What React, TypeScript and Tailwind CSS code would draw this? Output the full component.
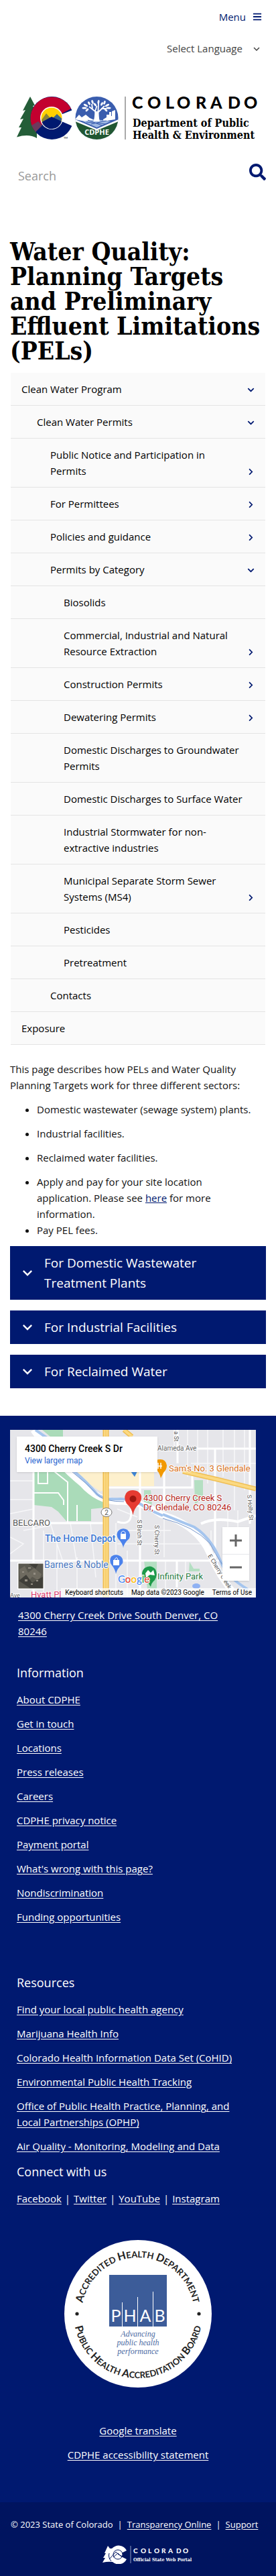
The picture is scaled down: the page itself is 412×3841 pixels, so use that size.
import type { ReactNode } from "react";
import { FaBars, FaChevronDown, FaChevronRight, FaSearch } from "react-icons/fa";
import { MdExpandMore } from "react-icons/md";

type NavRow = { label: string; level: 1 | 2 | 3 | 4; icon?: "open" | "closed" };

const navRows: NavRow[] = [
  { label: "Clean Water Program", level: 1, icon: "open" },
  { label: "Clean Water Permits", level: 2, icon: "open" },
  { label: "Public Notice and Participation in Permits", level: 3, icon: "closed" },
  { label: "For Permittees", level: 3, icon: "closed" },
  { label: "Policies and guidance", level: 3, icon: "closed" },
  { label: "Permits by Category", level: 3, icon: "open" },
  { label: "Biosolids", level: 4 },
  { label: "Commercial, Industrial and Natural Resource Extraction", level: 4, icon: "closed" },
  { label: "Construction Permits", level: 4, icon: "closed" },
  { label: "Dewatering Permits", level: 4, icon: "closed" },
  { label: "Domestic Discharges to Groundwater Permits", level: 4 },
  { label: "Domestic Discharges to Surface Water", level: 4 },
  { label: "Industrial Stormwater for non-extractive industries", level: 4 },
  { label: "Municipal Separate Storm Sewer Systems (MS4)", level: 4, icon: "closed" },
  { label: "Pesticides", level: 4 },
  { label: "Pretreatment", level: 4 },
  { label: "Contacts", level: 3 },
  { label: "Exposure", level: 1 },
];

const indent = { 1: "pl-4", 2: "pl-[39px]", 3: "pl-[59px]", 4: "pl-[79px]" };

const information = [
  "About CDPHE",
  "Get in touch",
  "Locations",
  "Press releases",
  "Careers",
  "CDPHE privacy notice",
  "Payment portal",
  "What's wrong with this page?",
  "Nondiscrimination",
  "Funding opportunities",
];

const resources = [
  "Find your local public health agency",
  "Marijuana Health Info",
  "Colorado Health Information Data Set (CoHID)",
  "Environmental Public Health Tracking",
  "Office of Public Health Practice, Planning, and Local Partnerships (OPHP)",
  "Air Quality - Monitoring, Modeling and Data",
];

function DepartmentLogo() {
  return (
    <svg viewBox="0 0 363 66" className="block w-full" role="img" aria-label="Colorado Department of Public Health and Environment">
      <path d="M20 0 L27 13 L24 14 L30 24 L30 62 Q18 55 0 60.500 L7 46 L3 46 L10 33 L5 34 L13 20 L9 21 Z" fill="#245d38" />
      <circle cx="52.500" cy="32" r="32" fill="#001970" />
      <path d="M20.500 32 A32 32 0 0 1 81 18 L68 25 L52 32 L26 50 Q20.500 42 20.500 32 Z" fill="#c3002f" />
      <path d="M22 43 L32 37 L38 43 L28 53 Z" fill="#6d3a5d" />
      <path d="M81 21 L86 19 L86 46 L81 43 L67 37 L67 26.500 Z" fill="#fff" />
      <circle cx="52" cy="32" r="17" fill="#fff" />
      <circle cx="52" cy="32" r="15.500" fill="#ffd100" />
      <path d="M37 35 L44 25 L52 34 L60 27 L67 35 A15.500 15.500 0 0 1 37 35 Z" fill="#8b8536" />
      <path d="M54 32 L60 26 L67.400 33 L66 37 Z" fill="#35658e" />
      <path d="M37.500 38 L52 30 L67 37 A15.500 15.500 0 0 1 37.500 38 Z" fill="#001970" />
      <text x="70" y="63" fontSize="4" fontFamily="Lato">TM</text>

      <clipPath id="sealClip">
        <circle cx="119.500" cy="32" r="32" />
      </clipPath>
      <g clipPath="url(#sealClip)">
        <path d="M87 0 H152 V64 H87 Z" fill="#3a5dae" />
        <path d="M87 34 L93 27 L97 31 L103 27 L109 32 L116 35 L116 40 L87 34 Z M129 34 L134 31 V27 H138 V23 H141 V29 H142 V22 L147 20 V34 L129 37 Z" fill="#fff" />
        <path d="M87 34 L119.500 48 L152 34 V64 H87 Z" fill="#fff" />
        <path d="M87 37 L119.500 50.500 L152 37 V64 H87 Z" fill="#215732" />
        <path d="M99 37 L119 34 L140 37 L119.500 46 Z" fill="#9fb8e2" />
        <path d="M104 38 L133 41 M111 41 L134 36 M106 35 L127 43" stroke="#3a5dae" fill="none" />
        <path d="M115 37 Q119 31 117 22 L108 15 M117 22 L119.500 14 M121 24 L131 14 M113 18 L112 11 M121.500 22 L122 10 M126 18 L134 18 M123 37 Q121 30 121.500 22" stroke="#fff" strokeWidth="1.800" fill="none" />
        <path d="M117 22 H122 L123 37 H115 Z" fill="#fff" />
        <g fill="#fff">
          <ellipse cx="103" cy="13" rx="3.500" ry="1.500" transform="rotate(30 103 13)" />
          <ellipse cx="101" cy="17" rx="3.500" ry="1.500" />
          <ellipse cx="108" cy="10" rx="3" ry="1.500" transform="rotate(60 108 10)" />
          <ellipse cx="105" cy="20" rx="3" ry="1.500" transform="rotate(-45 105 20)" />
          <ellipse cx="113" cy="8" rx="3" ry="1.500" transform="rotate(70 113 8)" />
          <ellipse cx="117" cy="12" rx="3" ry="1.500" transform="rotate(50 117 12)" />
          <ellipse cx="122" cy="8" rx="3" ry="1.500" transform="rotate(100 122 8)" />
          <ellipse cx="127" cy="11" rx="3" ry="1.500" transform="rotate(120 127 11)" />
          <ellipse cx="131" cy="9" rx="3" ry="1.500" transform="rotate(110 131 9)" />
          <ellipse cx="135" cy="13" rx="3.500" ry="1.500" transform="rotate(150 135 13)" />
          <ellipse cx="137" cy="17" rx="3.500" ry="1.500" />
          <ellipse cx="133" cy="20" rx="3" ry="1.500" transform="rotate(45 133 20)" />
        </g>
      </g>
      <text x="119.500" y="57" textAnchor="middle" fontSize="11" fontWeight="700" fontFamily="Open Sans" fill="#fff">CDPHE</text>

      <path d="M162 0 V64" stroke="#555" />
      <text x="172 195 222 239 267 289 315 339" y="18" fontSize="25" fontWeight="900" fontFamily="Lato">COLORADO</text>
      <g fontSize="16" fontWeight="700" fontFamily="'DejaVu Serif Condensed', 'DejaVu Serif', serif">
        <text x="173" y="45">Department of Public</text>
        <text x="173" y="63">Health &amp; Environment</text>
      </g>
    </svg>
  );
}

function PlaceMap() {
  return (
    <div className="relative mr-[15px] h-[250px] overflow-hidden bg-[#e8eaed]">
      <svg viewBox="0 0 367 250" preserveAspectRatio="xMidYMid slice" className="block h-full w-full" fontFamily="Roboto, sans-serif">
        <rect width="367" height="250" fill="#e6e6ea" />
        <path d="M48 0 H79 V10 H60 Z M35 62 H90 L105 76 L125 95 L141 108 V116 L121 118 V136 H84 L72 122 L62 115 L35 112 Z" fill="#aadbb9" />
        <path d="M90 62 H215 V84 H150 L135 92 Z" fill="#fdf0cd" />
        <path d="M200 90 H210 L212 112 L200 110 Z M200 195 H219 V237 H205 Z M268 197 L274 207 H283 V211 H267 Z M275 75 H288 V100 L276 112 Z" fill="#b4dfc2" />
        <g fill="none" stroke="#f7f7f9" strokeWidth="1.500">
          <path d="M0 76 H35 M0 104 H35 M0 160 L20 170 L0 185 M20 150 L60 143 M60 139 L80 200 M90 139 L100 200 M120 139 L128 220 M50 150 V250 M70 160 V250 M100 190 V240 M0 125 L35 118 M158 139 V250 M175 180 V250 M230 70 V190 M245 0 V30 M265 0 V70 M280 0 V60 M295 0 V80 M318 0 V70 M335 0 V120 M350 0 V90 M232 195 V250 M262 195 V225 M300 150 V200 M325 120 V145 M340 120 V145 M160 150 H240 M160 170 H290 M230 28 H367 M270 50 H367 M160 118 L190 130" />
        </g>
        <g fill="none" stroke="#fff">
          <path d="M35 62 V250 M0 195 H315 M35 139 H141 M141 86 H272 V60 M228 28 H367 M306 28 V195 M230 60 V120 M194 62 V195 M249 195 V235 M250 0 V50 M358 0 V140 M194 147 V250 M160 137 Q185 145 180 115" strokeWidth="3" />
          <path d="M42 62 V80 H56 V62 M35 94 H72 L80 105 V112 M66 62 L86 78 V139 M100 112 V136" strokeWidth="2" />
          <path d="M285 140 Q305 130 340 137 L367 128" strokeWidth="4" />
          <path d="M35 0 Q70 50 108 80 Q130 105 160 107 Q195 105 225 126 Q280 142 298 184 Q312 220 340 250" strokeWidth="10" />
        </g>
        <g fill="none" stroke="#a5c5ee" strokeWidth="4">
          <path d="M38 0 L55 12 M96 62 Q115 78 130 96 Q140 105 165 103 Q190 104 203 117 L228 128 M228 126 L275 145 Q302 162 316 200 Q325 220 355 238" />
          <path d="M92 62 Q115 80 132 98 Q142 107 170 107" stroke="#7897ca" strokeWidth="1" />
          <path d="M228 132 Q275 144 298 169 Q316 203 327 212" stroke="#7897ca" strokeWidth="1" />
        </g>
        <g fill="none">
          <path d="M143 0 V250" stroke="#f1bd4e" strokeWidth="9" />
          <path d="M143 0 V250" stroke="#fbd982" strokeWidth="6" />
          <path d="M143 0 V250" stroke="#f4c45e" strokeWidth="1" />
          <path d="M170 0 L182 10 M258 62 L310 74 L367 88" stroke="#f0bf54" strokeWidth="7" />
          <path d="M170 0 L182 10 M258 62 L310 74 L367 88" stroke="#fbd982" strokeWidth="4" />
        </g>
        <ellipse cx="278" cy="233" rx="6" ry="4" fill="#8fb1f3" />
        <ellipse cx="144" cy="123" rx="8" ry="6.500" fill="#fff" stroke="#777" />
        <text x="144" y="127" textAnchor="middle" fontSize="10" fill="#555">2</text>

        <path d="M180 62 L186 70 L190 62 Z" fill="#3f86d6" />
        <path d="M225 72 Q223 63 218 59 V45 Q232 41 234 53 Q234 59 229 64 Z" fill="#f29900" />
        <path d="M221 49 V58 M225 49 V58 M220 54 H227" stroke="#fff" strokeWidth="1.500" />
        <path d="M183.500 127 Q182 117 174 110 Q169 102 173 95 Q176 90 183.500 90 Q191 90 195 96 Q198 102 193 110 Q185 117 183.500 127 Z" fill="#e63b32" />
        <circle cx="183.500" cy="103" r="5" fill="#9e1711" />
        <path d="M169 176 Q168 169 162 163 Q157 156 162 150 Q168 145 175 149 Q181 154 178 162 Q170 169 169 176 Z M158 215 Q157 208 152 202 Q147 196 151 189 Q157 184 164 188 Q170 192 168 199 Q159 208 158 215 Z" fill="#4b82ec" />
        <path d="M165 155 H173 V163 H165 Z M154 194 H163 V202 H154 Z" fill="#fff" />
        <path d="M166 155 V153 Q169 149 172 153 V155 M156 194 Q159 187 161 194" stroke="#fff" fill="none" />
        <path d="M210 234 Q207 228 201 223 Q193 214 201 206 Q210 200 217 208 Q221 216 216 224 Q211 228 210 234 Z" fill="#1d9a4a" />
        <path d="M202 214 L206 209 L210 213 L214 209 L216 217 L209 216 L203 220 Z" fill="#fff" />

        <g stroke="#fff" strokeWidth="2" paintOrder="stroke" strokeLinejoin="round">
          <text x="220" y="31" fontSize="10" fill="#666">Alameda Ave</text>
          <text x="237" y="62" fontSize="13" fill="#d8731e">Sam's No. 3 Glendale</text>
          <text x="199" y="106" fontSize="13" fill="#b52620">4300 Cherry Creek S</text>
          <text x="199" y="120" fontSize="13" fill="#b52620">Dr, Glendale, CO 80246</text>
          <text x="52" y="167" fontSize="14" fontWeight="500" fill="#3976d2">The Home Depot</text>
          <text x="51" y="206" fontSize="14" fill="#4675bd">Barnes &amp; Noble</text>
          <text x="220" y="223" fontSize="13" fill="#287b43">Infinity Park</text>
          <text x="31" y="250" fontSize="13" fill="#d9386d">Hyatt Pl</text>
          <text x="4" y="143" fontSize="13" fill="#555">BELCARO</text>
          <text x="0" y="250" fontSize="9" fill="#666">Ave</text>
          <text x="0" y="0" fontSize="9" fill="#555" transform="translate(190 134) rotate(90)">S Birch St</text>
          <text x="0" y="0" fontSize="9" fill="#555" transform="translate(216 142) rotate(90)">S Cherry St</text>
          <text x="0" y="0" fontSize="9" fill="#555" transform="translate(354 97) rotate(85)">S Holly St</text>
          <text x="0" y="0" fontSize="9" fill="#555" transform="translate(245 2) rotate(90)">a St</text>
          <text x="0" y="0" fontSize="9" fill="#555" transform="translate(295 188) rotate(58)">E Cherry Creek</text>
        </g>
        <text x="161" y="228" fontSize="15" fontWeight="500" fontFamily="Lato" stroke="#fff" strokeWidth="2" paintOrder="stroke">
          <tspan fill="#4285f4">G</tspan><tspan fill="#ea4335">o</tspan><tspan fill="#fbbc05">o</tspan><tspan fill="#4285f4">g</tspan><tspan fill="#34a853">l</tspan><tspan fill="#ea4335">e</tspan>
        </text>

        <g>
          <rect x="11" y="198" width="40" height="40" rx="1" fill="#fff" />
          <rect x="12.500" y="199.500" width="37" height="37" fill="#5a584f" />
          <path d="M14 208 L22 203 L27 213 L36 206 L47 215 L43 225 L33 219 L23 231 L15 223 Z" fill="#6f6b60" />
          <path d="M13 225 L24 216 L33 228 L49 219 V236 H30 Z M28 200 H42 L38 207 Z" fill="#403f39" />
          <path d="M18 211 h3 v2 h-3 z M27 205 h4 v2 h-4 z M35 213 h3 v3 h-3 z M22 223 h4 v3 h-4 z M39 224 h3 v2 h-3 z M31 229 h3 v2 h-3 z" fill="#948e83" />
        </g>
      </svg>

      <div className="absolute top-2.5 left-2.5 flex h-[53px] w-[210px] flex-col justify-center bg-white px-3 font-['Roboto',sans-serif] shadow">
        <p className="text-sm leading-[18px] font-medium text-black">4300 Cherry Creek S Dr</p>
        <a href="#map" className="text-xs leading-[18px] text-[#2864d0]">View larger map</a>
      </div>
      <div className="absolute top-[145px] right-2.5 flex h-20 w-10 flex-col bg-white text-[#666] shadow">
        <button type="button" aria-label="Zoom in" className="flex flex-1 items-center justify-center border-b border-gray-200">
          <svg viewBox="0 0 18 18" className="size-[18px]"><path d="M7.500 0h3v7.500H18v3h-7.500V18h-3v-7.500H0v-3h7.500z" fill="currentColor" /></svg>
        </button>
        <button type="button" aria-label="Zoom out" className="flex flex-1 items-center justify-center">
          <svg viewBox="0 0 18 18" className="size-[18px]"><path d="M0 7.500h18v3H0z" fill="currentColor" /></svg>
        </button>
      </div>
      <div className="absolute right-0 bottom-0 flex h-[14px] items-center gap-3 bg-white/70 px-1.5 font-['Roboto',sans-serif] text-[10px] leading-[14px] whitespace-nowrap text-black">
        <span>Keyboard shortcuts</span>
        <span>Map data ©2023 Google</span>
        <span>Terms of Use</span>
      </div>
    </div>
  );
}

function AccreditationSeal() {
  return (
    <svg viewBox="0 0 220 220" className="block w-[220px]" role="img" aria-label="Public Health Accreditation Board">
      <circle cx="110" cy="110" r="110" fill="#fff" />
      <path id="arcTop" d="M26 110 A84 84 0 0 1 194 110" fill="none" />
      <path id="arcBottom" d="M14 110 A96 96 0 0 0 206 110" fill="none" />
      <g fontFamily="Lato, sans-serif" fontWeight="700" fontSize="13" fill="#222" textAnchor="middle">
        <text>
          <textPath href="#arcTop" startOffset="50%">
            <tspan fontSize="16">A</tspan>CCREDITED <tspan fontSize="16">H</tspan>EALTH <tspan fontSize="16">D</tspan>EPARTMENT
          </textPath>
        </text>
        <text>
          <textPath href="#arcBottom" startOffset="50%">
            <tspan fontSize="16">P</tspan>UBLIC <tspan fontSize="16">H</tspan>EALTH <tspan fontSize="16">A</tspan>CCREDITATION <tspan fontSize="16">B</tspan>OARD
          </textPath>
        </text>
      </g>
      <circle cx="19" cy="110" r="2.600" fill="#222" />
      <circle cx="201" cy="110" r="2.600" fill="#222" />
      <rect x="67" y="52" width="86" height="77" fill="#3c5c99" />
      <path d="M86.500 93 V129 M109.500 85 V129 M132.500 77 V129" stroke="#fff" />
      <g fontFamily="Lato, sans-serif" fontSize="25" fill="#fff" textAnchor="middle">
        <text x="77" y="122">P</text>
        <text x="98" y="122">H</text>
        <text x="121" y="122">A</text>
        <text x="142.500" y="122">B</text>
      </g>
      <g fontFamily="'Liberation Serif', serif" fontStyle="italic" fontSize="12" fill="#4c6ba3" textAnchor="middle">
        <text x="110" y="144">Advancing</text>
        <text x="110" y="157">public health</text>
        <text x="110" y="170">performance</text>
      </g>
    </svg>
  );
}

function PortalLogo() {
  return (
    <svg viewBox="0 0 136 28" className="block w-[136px]" role="img" aria-label="Colorado Official State Web Portal">
      <path d="M8 1 L11 5 L14 5 A13.500 13.500 0 0 1 36 8 L28 12 A5 5 0 1 0 28 17 L36 21 A13.500 13.500 0 0 1 15 25 Q8 24 0 26 L4 19 L1 19 L5 12 L3 12 Z" fill="#fff" />
      <circle cx="23" cy="14" r="7" fill="#fff" stroke="#00145f" />
      <path d="M10 21 L20 10 L24 14 L30 17 M16 18 L23 12 L29 18 M10 12 Q8 18 13 24" fill="none" stroke="#00145f" />
      <path d="M42 1 V27" stroke="#8f9bc4" />
      <text x="46 57 68 77 88 98 110 120" y="12" fontSize="10" fontWeight="900" fontFamily="Lato" fill="#fff">COLORADO</text>
      <text x="46" y="24" fontSize="7" fontWeight="700" fontFamily="'DejaVu Serif Condensed', 'DejaVu Serif', serif" fill="#fff">Official State Web Portal</text>
    </svg>
  );
}

function FooterLink({ children }: { children: ReactNode }) {
  return (
    <a href="#" className="underline underline-offset-2">
      {children}
    </a>
  );
}

function LinkList({ title, links }: { title: string; links: string[] }) {
  return (
    <section className="pr-10 pl-[25px]">
      <h2 className="text-lg leading-7">{title}</h2>
      <ul className="mt-[14px] flex flex-col gap-3">
        {links.map((link) => (
          <li key={link}>
            <FooterLink>{link}</FooterLink>
          </li>
        ))}
      </ul>
    </section>
  );
}

function Accordion({ title }: { title: string }) {
  return (
    <button type="button" aria-expanded="false" className="flex w-full items-center bg-[#001970] py-2.5 pr-10 pl-3 text-left text-[19px] leading-[30px] text-white">
      <MdExpandMore className="mr-[11px] size-7 shrink-0" />
      {title}
    </button>
  );
}

export default function App() {
  return (
    <div className="bg-white font-['Open_Sans','Noto_Sans',sans-serif] text-[15px] leading-6 text-[#111]">
      <header>
        <div className="flex justify-end px-[21px] pt-[13px]">
          <button type="button" className="flex items-center gap-2.5 text-[#001970]">
            Menu
            <FaBars className="size-[14px]" />
          </button>
        </div>
        <div className="mt-[23px] flex justify-end pr-5">
          <div className="relative">
            <select aria-label="Select Language" className="block h-6 appearance-none bg-transparent pr-[30px] text-[#444]">
              <option>Select Language</option>
            </select>
            <MdExpandMore className="pointer-events-none absolute top-1 right-0 size-[18px] text-[#444]" />
          </div>
        </div>
        <a href="#" className="mt-[60px] mr-6 ml-[25px] block">
          <DepartmentLogo />
        </a>
        <form className="mt-8 flex justify-between pr-[15px] pl-[27px]">
          <input type="search" aria-label="Search" placeholder="Search" className="mt-1 mb-0.5 h-8 min-w-0 flex-1 bg-transparent text-lg outline-none placeholder:text-[#999]" />
          <button type="button" aria-label="Submit search" className="flex h-7 items-center text-[#001970]">
            <FaSearch className="size-[25px]" />
          </button>
        </form>
      </header>

      <main className="px-[15px]">
        <h1 className="mt-[77px] font-['DejaVu_Serif_Condensed','DejaVu_Serif',serif] text-[37px] leading-[37px] font-bold text-black">
          Water Quality: Planning Targets and Preliminary Effluent Limitations (PELs)
        </h1>

        <nav aria-label="Section" className="mx-px mt-3.5 bg-[#fafafa]">
          <ul>
            {navRows.map((row) => (
              <li key={row.label} className="border-b border-[#e4e4e4]">
                <a href="#" className={`flex items-end justify-between py-3 pr-4 text-black ${indent[row.level]}`}>
                  <span className={row.icon ? "max-w-[265px]" : "max-w-[280px]"}>{row.label}</span>
                  {row.icon === "open" && <FaChevronDown className="mb-[5px] size-[11px] text-[#001970]" />}
                  {row.icon === "closed" && <FaChevronRight className="mb-[5px] size-[11px] text-[#001970]" />}
                </a>
              </li>
            ))}
          </ul>
        </nav>

        <p className="mt-6">This page describes how PELs and Water Quality Planning Targets work for three different sectors:</p>
        <ul className="mt-3 list-disc pl-10">
          <li className="mb-3">Domestic wastewater (sewage system) plants.</li>
          <li className="mb-3">Industrial facilities.</li>
          <li className="mb-3">Reclaimed water facilities.</li>
          <li className="pr-10">
            Apply and pay for your site location application. Please see{" "}
            <a href="#" className="text-[#001970] underline">here</a> for more information.
          </li>
          <li>Pay PEL fees.</li>
        </ul>

        <div className="mt-3 flex flex-col gap-4">
          <Accordion title="For Domestic Wastewater Treatment Plants" />
          <Accordion title="For Industrial Facilities" />
          <Accordion title="For Reclaimed Water" />
        </div>
      </main>

      <footer className="mt-[41px] bg-[#001970] text-white">
        <div className="px-[15px] pt-[21px]">
          <PlaceMap />
          <p className="mt-[14px] pr-10 pl-3">
            <FooterLink>4300 Cherry Creek Drive South Denver, CO 80246</FooterLink>
          </p>
        </div>
        <div className="mt-9">
          <LinkList title="Information" links={information} />
        </div>
        <div className="mt-[72px]">
          <LinkList title="Resources" links={resources} />
        </div>
        <section className="mt-3 px-[25px]">
          <h2 className="text-lg leading-7">Connect with us</h2>
          <p className="mt-[14px] flex gap-[5px]">
            <FooterLink>Facebook</FooterLink>|<FooterLink>Twitter</FooterLink>|<FooterLink>YouTube</FooterLink>|<FooterLink>Instagram</FooterLink>
          </p>
        </section>
        <div className="mt-[50px] flex flex-col items-center">
          <AccreditationSeal />
          <div className="mt-[52px] flex flex-col items-center gap-3">
            <FooterLink>Google translate</FooterLink>
            <FooterLink>CDPHE accessibility statement</FooterLink>
          </div>
        </div>
        <div className="mt-[59px] bg-[#00145f] px-4 pt-[21px] pb-[18px]">
          <p className="flex gap-[7px] text-[13px] leading-6 whitespace-nowrap">
            <span>© 2023 State of Colorado</span>|<FooterLink>Transparency Online</FooterLink>|<FooterLink>Support</FooterLink>
          </p>
          <div className="mt-[19px] ml-[30px] flex justify-center">
            <PortalLogo />
          </div>
        </div>
      </footer>
    </div>
  );
}
